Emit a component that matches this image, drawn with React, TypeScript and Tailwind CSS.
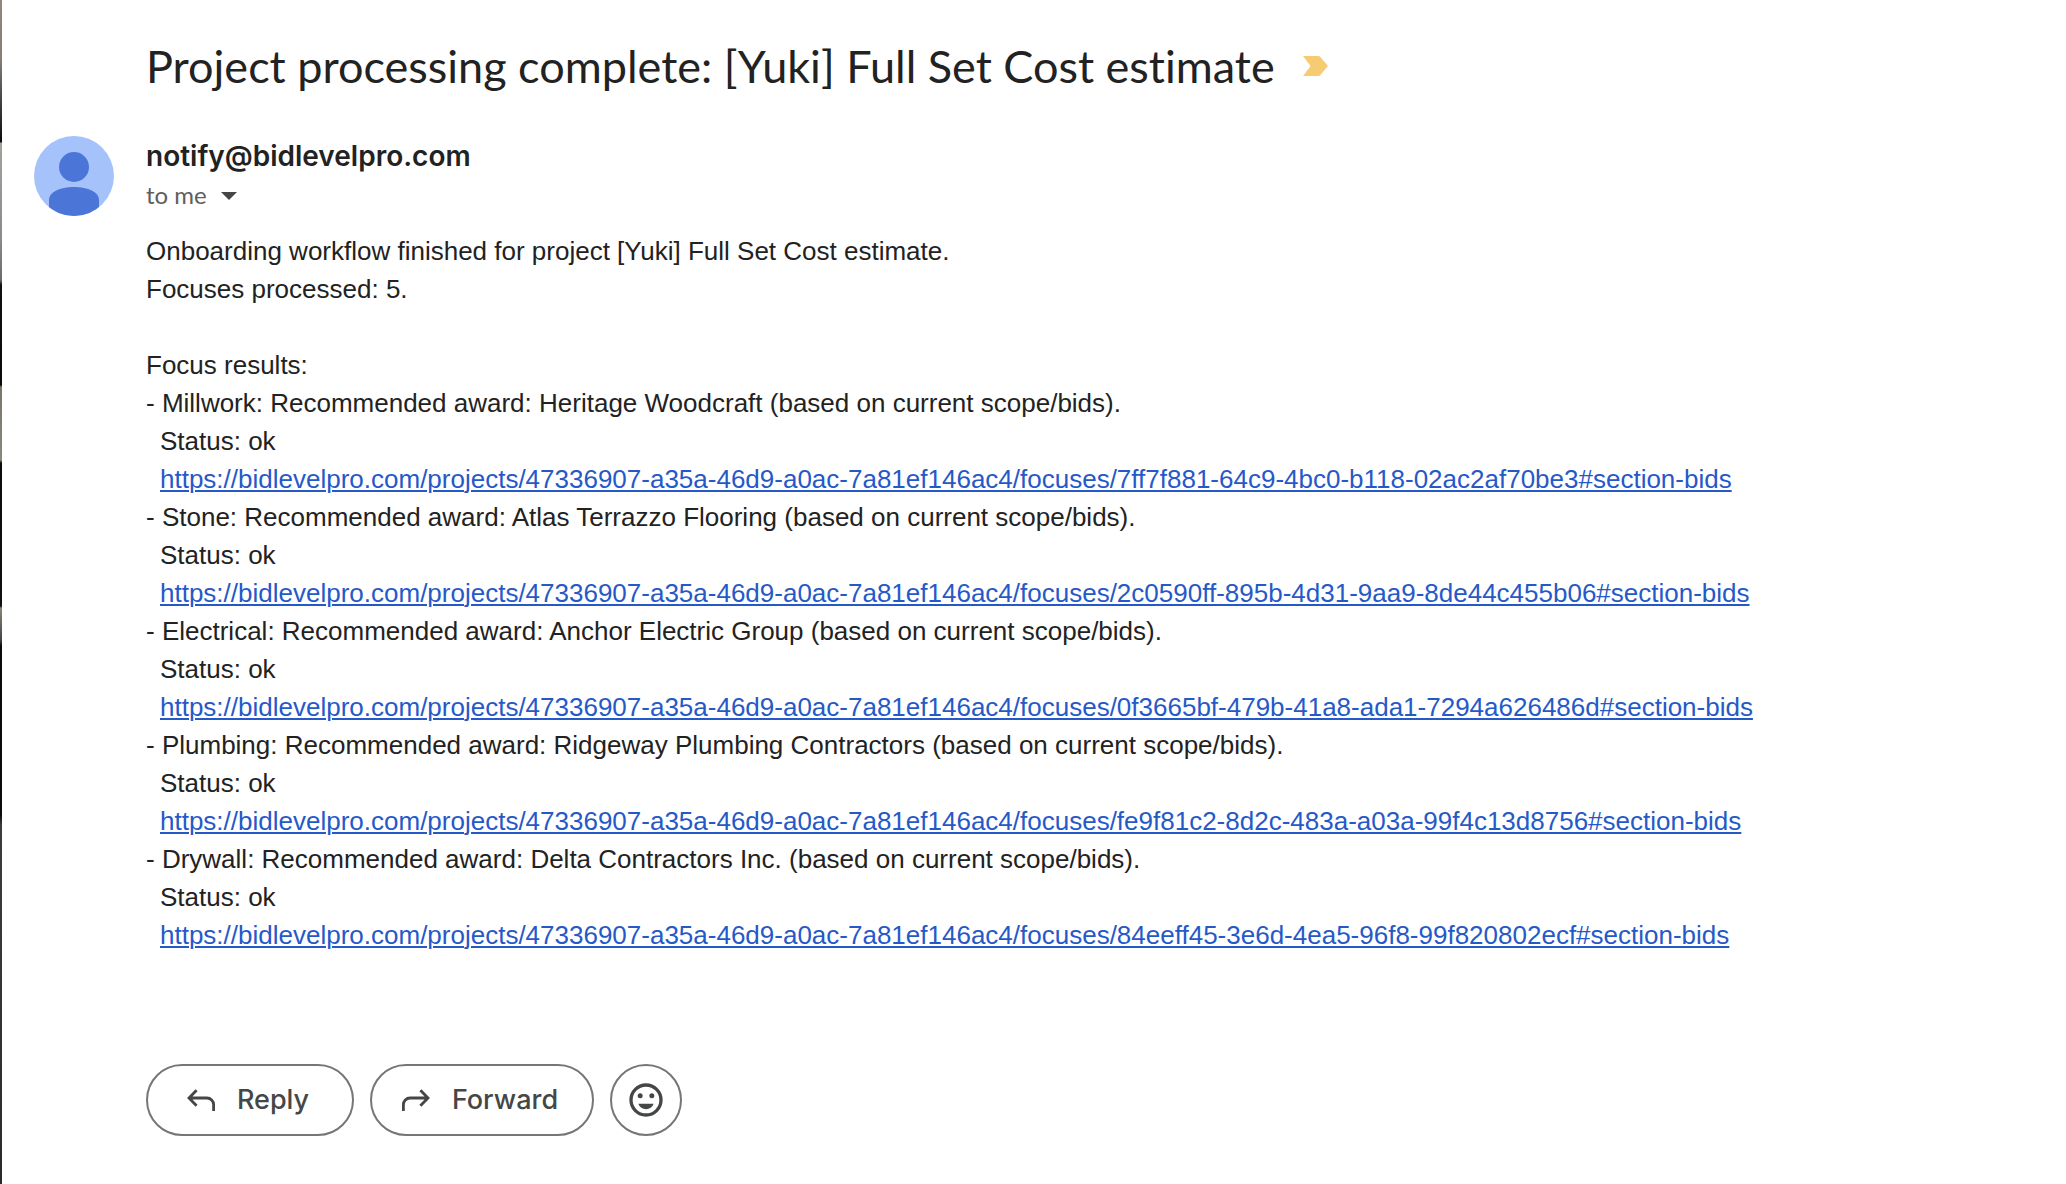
interface Focus {
  name: string;
  award: string;
  id: string;
}

const PROJECT_URL =
  "https://bidlevelpro.com/projects/47336907-a35a-46d9-a0ac-7a81ef146ac4";

const focuses: Focus[] = [
  {
    name: "Millwork",
    award: "Heritage Woodcraft",
    id: "7ff7f881-64c9-4bc0-b118-02ac2af70be3",
  },
  {
    name: "Stone",
    award: "Atlas Terrazzo Flooring",
    id: "2c0590ff-895b-4d31-9aa9-8de44c455b06",
  },
  {
    name: "Electrical",
    award: "Anchor Electric Group",
    id: "0f3665bf-479b-41a8-ada1-7294a626486d",
  },
  {
    name: "Plumbing",
    award: "Ridgeway Plumbing Contractors",
    id: "fe9f81c2-8d2c-483a-a03a-99f4c13d8756",
  },
  {
    name: "Drywall",
    award: "Delta Contractors Inc.",
    id: "84eeff45-3e6d-4ea5-96f8-99f820802ecf",
  },
];

const Avatar = () => (
  <svg viewBox="0 0 80 80" className="size-20 shrink-0" aria-hidden="true">
    <clipPath id="avatar-clip">
      <circle cx="40" cy="40" r="40" />
    </clipPath>
    <g clipPath="url(#avatar-clip)">
      <rect width="80" height="80" fill="#a6c2fb" />
      <circle cx="40" cy="31" r="15" fill="#4b76d8" />
      <path d="M15 80V64C15 56 26 51 40 51S65 56 65 64V80Z" fill="#4b76d8" />
    </g>
  </svg>
);

const ReplyArrow = ({ className = "" }: { className?: string }) => (
  <svg
    viewBox="0 0 28 22"
    className={`w-7 h-[22px] ${className}`}
    fill="none"
    stroke="currentColor"
    strokeWidth="2.8"
    aria-hidden="true"
  >
    <path d="M9.6 1.2 2 9l7.6 7.8M2 9h18a6.6 6.6 0 0 1 6.6 6.6V22" />
  </svg>
);

const SmileIcon = () => (
  <svg viewBox="0 0 24 24" className="size-10" fill="currentColor" aria-hidden="true">
    <circle cx="12" cy="12" r="9" fill="none" stroke="currentColor" strokeWidth="2" />
    <circle cx="8.5" cy="9.5" r="1.5" />
    <circle cx="15.5" cy="9.5" r="1.5" />
    <path d="M12 17.5c2.100 0 3.900-1.200 4.600-3.200H7.400c.7 2 2.500 3.200 4.600 3.200z" />
  </svg>
);

const FocusResult = ({ name, award, id }: Focus) => {
  const href = `${PROJECT_URL}/focuses/${id}#section-bids`;

  return (
    <li>
      <p>
        - {name}: Recommended award: {award} (based on current scope/bids).
      </p>
      <p className="pl-3.5">Status: ok</p>
      <p className="pl-3.5">
        <a
          href={href}
          className="text-[#2659c8] underline decoration-2 underline-offset-2 break-words"
        >
          {href}
        </a>
      </p>
    </li>
  );
};

export default function App() {
  return (
    <div className="flex min-h-screen bg-white text-[#222222]">
      {/* sliver of the desktop behind the window */}
      <div className="w-0.5 shrink-0 bg-[linear-gradient(to_bottom,#8f8680_0px,#857d77_60px,#444444_100px,#0b0b0b_142px,#a5a29c_143px,#8a8a88_240px,#6b6b6b_280px,#101010_285px,#0a0a0a_385px,#7b7468_387px,#8a8880_460px,#0c0c0c_463px,#101010_606px,#8a8578_608px,#444444_640px,#0a0a0a_646px,#0b0b0b_815px,#3a3d40_825px,#2a2a2a_100%)]" />

      <main className="flex-1 min-w-0 pl-8 pr-8 pt-9 pb-12">
        <div className="flex items-center gap-7 pl-28 mb-10">
          <h1 className="text-[45px] leading-[60px] font-['Lato',sans-serif] [font-variant-ligatures:none]">
            Project processing complete: [Yuki] Full Set Cost estimate
          </h1>
          <button type="button" aria-label="Important">
            <svg viewBox="0 0 25 20" className="w-[25px] h-5" aria-hidden="true">
              <path
                d="M0 0h15.500q1 0 1.600.8L25 10l-7.900 9.200q-.6.8-1.600.8H0l7.500-10z"
                fill="#f7cb73"
              />
            </svg>
          </button>
        </div>

        <header className="flex gap-8">
          <Avatar />
          <div>
            <p className="text-[28px] leading-10 font-semibold font-['Inter',sans-serif]">
              notify@bidlevelpro.com
            </p>
            <button
              type="button"
              aria-label="Show details"
              className="flex items-center gap-3.5 text-[24px] leading-[38px] text-[#5e5e5e] font-['Lato',sans-serif]"
            >
              to me
              <svg viewBox="0 0 16 10" className="w-4 h-2.5" aria-hidden="true">
                <path d="M0 2h16L8 10z" fill="#444746" />
              </svg>
            </button>
          </div>
        </header>

        <div className="mt-4 pl-28 text-[26px] leading-[38px] font-['Liberation_Sans',Arial,sans-serif]">
          <p>Onboarding workflow finished for project [Yuki] Full Set Cost estimate.</p>
          <p>Focuses processed: 5.</p>
          <p className="mt-[38px]">Focus results:</p>
          <ul>
            {focuses.map((focus) => (
              <FocusResult key={focus.id} {...focus} />
            ))}
          </ul>
        </div>

        <div className="flex gap-4 mt-[110px] pl-28 text-[27px] font-medium text-[#444746] font-['Inter',sans-serif]">
          <button
            type="button"
            className="flex items-center justify-center gap-[22px] w-52 h-[72px] pr-1 rounded-full border-2 border-[#747775]"
          >
            <ReplyArrow />
            Reply
          </button>
          <button
            type="button"
            className="flex items-center justify-center gap-[22px] w-56 h-[72px] pr-1 rounded-full border-2 border-[#747775]"
          >
            <ReplyArrow className="-scale-x-100" />
            Forward
          </button>
          <button
            type="button"
            aria-label="Add reaction"
            className="flex items-center justify-center size-[72px] rounded-full border-2 border-[#747775]"
          >
            <SmileIcon />
          </button>
        </div>
      </main>
    </div>
  );
}
